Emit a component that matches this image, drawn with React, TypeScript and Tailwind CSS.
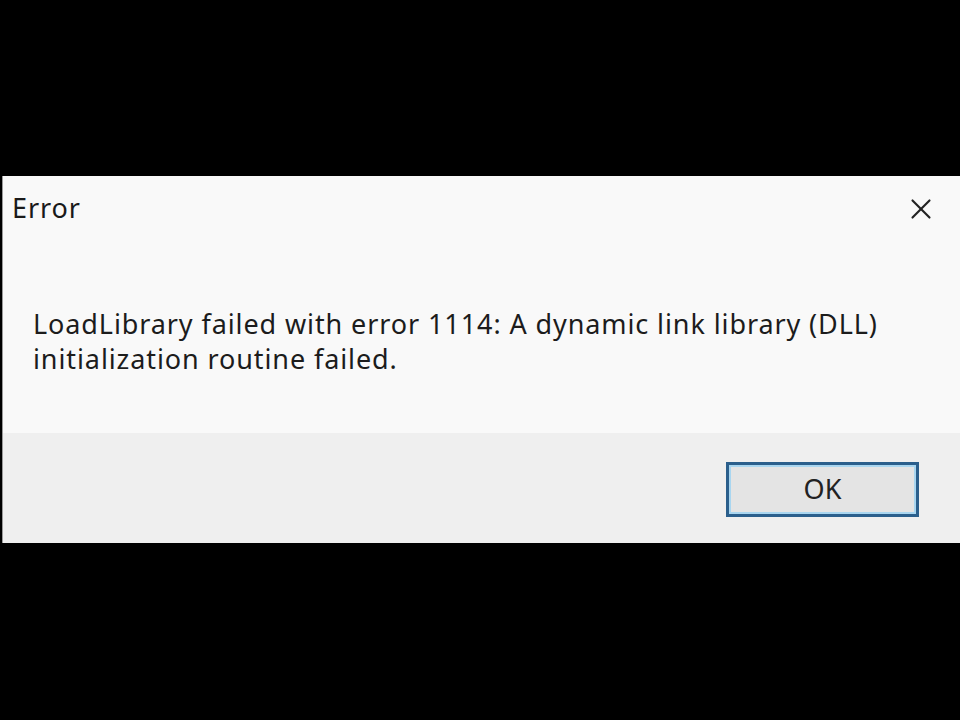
import { X } from 'lucide-react'

export default function App() {
  return (
    <div className="flex h-[720px] w-[960px] flex-col bg-black pt-[176px] font-['Noto_Sans',sans-serif]">
      <div className="ml-[2px] flex h-[367px] flex-col border-l border-[#9a9a9a] bg-[#f9f9f9]">
        <div className="flex h-[62px] items-start justify-between">
          <span className="pl-[9px] pt-[16px] text-[27px] leading-[32px] tracking-[0.9px] text-[#1a1a1a]">Error</span>
          <div className="mr-[22px] mt-[16px] text-[#222]">
            <X size={34} strokeWidth={1.5} />
          </div>
        </div>
        <div className="flex-1 pl-[30px] pt-[68px] text-[27px] leading-[35px] tracking-[0.9px] text-[#1c1c1c]">
          <p>LoadLibrary failed with error 1114: A dynamic link library (DLL)</p>
          <p>initialization routine failed.</p>
        </div>
        <div className="flex h-[110px] items-start justify-end bg-[#efefef] pr-[41px] pt-[29px]">
          <button className="flex h-[55px] w-[193px] items-center justify-center border-[3px] border-[#2b5f8c] bg-[#e4e4e4] text-[27px] text-[#222] shadow-[inset_0_0_0_2px_#a9d6f0]">
            OK
          </button>
        </div>
      </div>
    </div>
  )
}
